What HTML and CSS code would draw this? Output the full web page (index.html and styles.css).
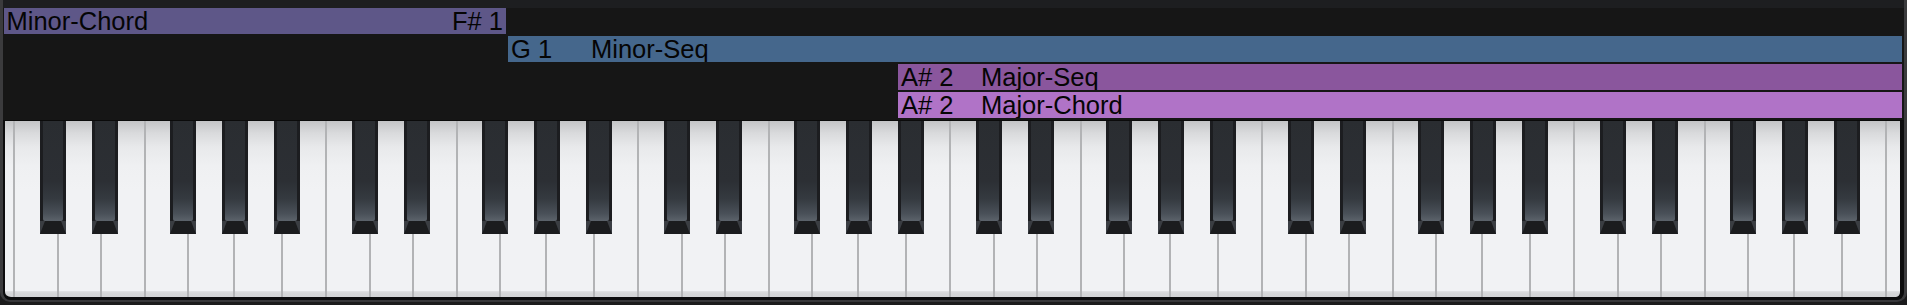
FILE: index.html
```html
<!DOCTYPE html>
<html>
<head>
<meta charset="utf-8">
<link rel="stylesheet" href="styles.css">
</head>
<body>
<div class="app">
  <div class="top-strip"></div>
  <div class="lanes">
    <div class="lane">
      <div class="bar minor-chord split" style="margin-left:0;width:502px"><span class="name">Minor-Chord</span><span class="note-r">F# 1</span></div>
    </div>
    <div class="lane">
      <div class="bar minor-seq" style="margin-left:504px"><span class="note">G 1</span><span class="name">Minor-Seq</span></div>
    </div>
    <div class="lane">
      <div class="bar major-seq" style="margin-left:894px"><span class="note">A# 2</span><span class="name">Major-Seq</span></div>
    </div>
    <div class="lane">
      <div class="bar major-chord" style="margin-left:894px"><span class="note">A# 2</span><span class="name">Major-Chord</span></div>
    </div>
  </div>
  <div class="keyboard">
    <div class="keys">
      <div class="whites">
        <div class="w first"></div>
        <div class="w c"></div><div class="w d"></div><div class="w e"></div><div class="w f"></div><div class="w g"></div><div class="w a"></div><div class="w b"></div>
        <div class="w c"></div><div class="w d"></div><div class="w e"></div><div class="w f"></div><div class="w g"></div><div class="w a"></div><div class="w b"></div>
        <div class="w c"></div><div class="w d"></div><div class="w e"></div><div class="w f"></div><div class="w g"></div><div class="w a"></div><div class="w b"></div>
        <div class="w c"></div><div class="w d"></div><div class="w e"></div><div class="w f"></div><div class="w g"></div><div class="w a"></div><div class="w b"></div>
        <div class="w c"></div><div class="w d"></div><div class="w e"></div><div class="w f"></div><div class="w g"></div><div class="w a"></div><div class="w b"></div>
        <div class="w c"></div><div class="w d"></div><div class="w e"></div><div class="w f"></div><div class="w g"></div><div class="w a"></div><div class="w b"></div>
        <div class="w last"></div>
      </div>
      <div class="blacks">
        <div class="bk cs first"></div><div class="bk ds"></div><div class="bk fs"></div><div class="bk gs"></div><div class="bk as"></div>
        <div class="bk cs"></div><div class="bk ds"></div><div class="bk fs"></div><div class="bk gs"></div><div class="bk as"></div>
        <div class="bk cs"></div><div class="bk ds"></div><div class="bk fs"></div><div class="bk gs"></div><div class="bk as"></div>
        <div class="bk cs"></div><div class="bk ds"></div><div class="bk fs"></div><div class="bk gs"></div><div class="bk as"></div>
        <div class="bk cs"></div><div class="bk ds"></div><div class="bk fs"></div><div class="bk gs"></div><div class="bk as"></div>
        <div class="bk cs"></div><div class="bk ds"></div><div class="bk fs"></div><div class="bk gs"></div><div class="bk as"></div>
      </div>
    </div>
  </div>
</div>
</body>
</html>
```
FILE: styles.css
```css
* { box-sizing: border-box; }
html, body { margin: 0; padding: 0; }
body {
  background: #1b1b1c;
  width: 1907px;
  height: 305px;
  overflow: hidden;
  font-family: "Liberation Sans", Arial, sans-serif;
}
.app {
  width: 1907px;
  height: 302px;
  background: #161616;
  border-left: 3px solid #3b3b3d;
  border-right: 3px solid #3b3b3d;
  border-bottom: 2px solid #37373a;
  border-radius: 0 0 10px 10px;
  display: flex;
  flex-direction: column;
  overflow: hidden;
}
.top-strip {
  height: 8px;
  background: #1d1e20;
  flex: none;
}
.lanes {
  display: flex;
  flex-direction: column;
  gap: 2px;
  padding: 0 2px 0 1px;
  flex: none;
}
.lane {
  height: 26px;
  display: flex;
}
.bar {
  height: 26px;
  flex: 1;
  display: flex;
  align-items: center;
  padding: 0 3px;
  font-size: 25.5px;
  line-height: 26px;
  color: #050505;
  white-space: nowrap;
  overflow: hidden;
}
.bar.split { flex: none; justify-content: space-between; padding-right: 3px; padding-left: 2.5px; }
.bar .note { width: 80px; flex: none; }
.minor-chord { background: #5e5788; }
.minor-seq { background: #45678c; }
.major-seq { background: #8a569d; }
.major-chord { background: #b073c7; }

.keyboard {
  margin-top: 2px;
  flex: 1;
  background: #0c0c0d;
  border-top: 1px solid #0a0a0a;
  border-left: 2px solid #0c0c0d;
  border-right: 4px solid #0c0c0d;
  border-bottom: 3px solid #0c0c0d;
  border-radius: 0 0 8px 8px;
  overflow: hidden;
}
.keys {
  position: relative;
  height: 100%;
}
.whites {
  display: flex;
  height: 100%;
}
.w {
  height: 100%;
  flex: none;
  border-left: 2px solid #b2b3b5;
  background: linear-gradient(to bottom,
    #c3c4c6 0px, #d9dadc 12px, #e8e9eb 26px, #eff0f2 45px, #f1f2f4 70px,
    #f1f2f4 calc(100% - 6px), #e2e3e5 calc(100% - 6px), #d6d7d9 calc(100% - 4px), #d3d4d6 100%);
}
.w.first { width: 8px; border-left: none; }
.w.c { width: 44px; }
.w.d { width: 42.5px; }
.w.e { width: 44px; }
.w.f { width: 43.5px; }
.w.g { width: 46px; }
.w.a { width: 48px; }
.w.b { width: 44px; }
.w.last { flex: 1; }

.blacks {
  position: absolute;
  top: 0;
  left: 0;
  right: 0;
  display: flex;
}
.bk {
  width: 26px;
  height: 113px;
  flex: none;
  position: relative;
  background: linear-gradient(to bottom, #1c1d20 calc(100% - 13px), #3a3d42 calc(100% - 13px));
}
.bk::before {
  content: "";
  position: absolute;
  left: 3px;
  right: 3px;
  top: 0;
  bottom: 13px;
  background: linear-gradient(to bottom, #2a2d31 0%, #2c2f34 60%, #353a40 78%, #4a5159 93%, #5c636b 100%);
  border-radius: 0 0 2px 2px;
}
.bk::after {
  content: "";
  position: absolute;
  left: 0;
  right: 0;
  bottom: 0;
  height: 13px;
  background: #1b1c1e;
  clip-path: polygon(5px 0, 21px 0, 100% 100%, 0 100%);
}
.bk.cs { margin-left: 52px; }
.bk.cs.first { margin-left: 35px; }
.bk.ds { margin-left: 26px; }
.bk.fs { margin-left: 52px; }
.bk.gs { margin-left: 26px; }
.bk.as { margin-left: 26px; }
```
